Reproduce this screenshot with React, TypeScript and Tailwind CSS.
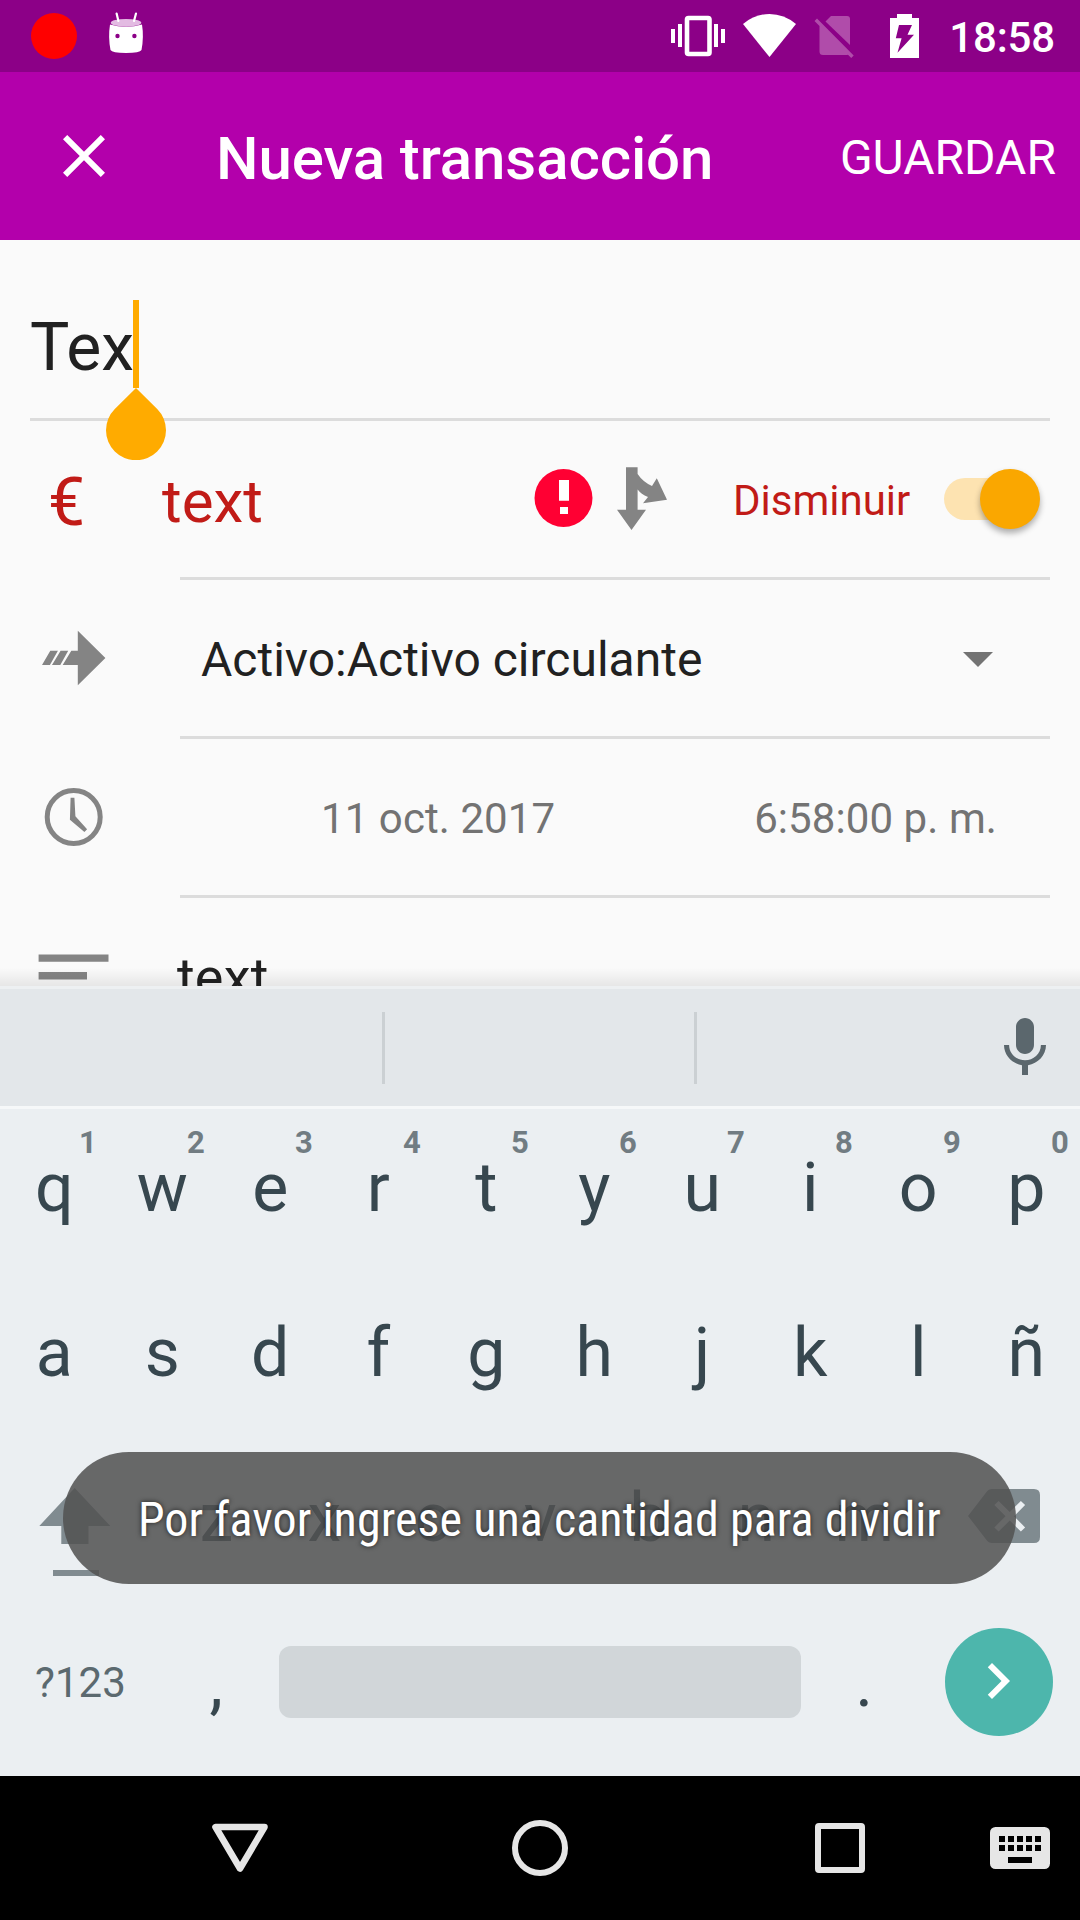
import React from "react";

const TOP_KEYS = ["q", "w", "e", "r", "t", "y", "u", "i", "o", "p"];
const TOP_HINTS = ["1", "2", "3", "4", "5", "6", "7", "8", "9", "0"];
const HOME_KEYS = ["a", "s", "d", "f", "g", "h", "j", "k", "l", "ñ"];
const BOTTOM_KEYS = ["z", "x", "c", "v", "b", "n", "m"];

function StatusBar() {
  return (
    <div className="flex h-[72px] items-start bg-[#8c0087] pl-[31px] pr-[25px]">
      <div className="mt-[13px] size-[46px] rounded-full bg-[#ff0000]" />
      <svg className="ml-[31px] mt-[12px]" width="36" height="42" viewBox="108 12 36 42">
        <path d="M110 24.500Q126 29 142 24.500Q144 37 141.500 50Q140 53 126 53Q112 53 110.500 50Q108 37 110 24.500Z" fill="#fff" />
        <ellipse cx="126" cy="22.800" rx="15.300" ry="3.900" fill="#e3bbe2" />
        <path d="M116.600 13.500L118.400 21M136 13.500L134 21" stroke="#fff" strokeWidth="2.200" strokeLinecap="round" />
        <circle cx="117.500" cy="36" r="2.200" fill="#8c0087" />
        <circle cx="134.400" cy="36" r="2.200" fill="#8c0087" />
      </svg>
      <svg className="ml-[526px] shrink-0" width="254" height="72" viewBox="670 0 254 72">
        <g fill="#fff">
          <rect x="671" y="29" width="4" height="14" />
          <rect x="678" y="24" width="4" height="23" />
          <rect x="714" y="24" width="4" height="23" />
          <rect x="721" y="29" width="4" height="14" />
          <path d="M743 24Q755 14 769.500 14T796 24L769.500 57Z" />
          <path fillRule="evenodd" d="M897 14H912V18H919V58H890V18H897ZM899 25H912L907.500 34.700H914L897.500 52.700L901.600 38.300H895.800Z" />
        </g>
        <rect x="687" y="18" width="22.500" height="36" rx="1.500" fill="none" stroke="#fff" strokeWidth="4.600" />
        <g fill="#b04caa">
          <path d="M831 16H847Q850 16 850 19V45L825.500 21.500Z" />
          <path d="M814.500 21L817 18.500L853.700 55.500L851.200 58L848 54.700Q847 55 846 55H823Q819.500 55 819.500 51.500V26Z" />
        </g>
      </svg>
      <span className="ml-auto whitespace-nowrap text-[42px] font-medium leading-[75px] tracking-[-0.15px] text-white">18:58</span>
    </div>
  );
}

function AppBar() {
  return (
    <div className="flex h-[168px] items-start bg-[#b300ab] pl-[63px] pr-[24px] text-white">
      <svg className="mt-[63px]" width="42" height="42" viewBox="5 5 14 14" fill="#fff">
        <path d="M19 6.410L17.590 5L12 10.590L6.410 5L5 6.410L10.590 12L5 17.590L6.410 19L12 13.410L17.590 19L19 17.590L13.410 12Z" />
      </svg>
      <h1 className="ml-[111px] whitespace-nowrap text-[60px] font-medium leading-[173px] tracking-[-0.08px]">Nueva transacción</h1>
      <span className="ml-auto text-[48px] leading-[171px]">GUARDAR</span>
    </div>
  );
}

function Row({ children }: { children: React.ReactNode }) {
  return (
    <>
      <div className="flex h-[156px] shrink-0 items-start">{children}</div>
      <div className="ml-[180px] mr-[30px] h-[3px] shrink-0 bg-[#dcdcdc]" />
    </>
  );
}

function TransactionForm() {
  return (
    <div className="relative flex h-[746px] flex-col overflow-hidden bg-[#fafafa] text-[#212121]">
      <div className="mx-[30px] flex h-[181px] shrink-0 items-start border-b-[3px] border-[#dcdcdc] pt-[60px]">
        <span className="w-[103px] text-[66px] leading-[95px]">Tex</span>
        <div className="relative h-[88px] w-[6px] bg-[#ffab00]">
          <svg className="absolute -left-[27px] top-[88px]" width="60" height="72" viewBox="0 0 60 72">
            <path d="M30 0L51.200 21A30 30 0 1 1 8.800 21Z" fill="#ffab00" />
          </svg>
        </div>
      </div>

      <Row>
        <span className="ml-[48px] w-[114px] text-[66px] leading-[163px] text-[#c11b17]">€</span>
        <span className="text-[60px] leading-[161px] text-[#c11b17]">text</span>
        <div className="ml-auto flex items-start">
          <svg className="mt-[40px]" width="140" height="76" viewBox="530 461 140 76">
            <circle cx="563.500" cy="498" r="29" fill="#ff0033" />
            <path d="M559 480H569V500.700H559ZM560 507H568V514H560Z" fill="#fff" />
            <path d="M626 467.300H637.600V474Q643 482 652 486L656.800 478.300L667 499.700L643 503.300L648 497Q641 494 637.600 489.500V509.700H646L631.500 530L617 509.700H626Z" fill="#848484" />
          </svg>
          <span className="ml-[63px] w-[174px] whitespace-nowrap text-[42px] leading-[159px] text-[#c11b17]">Disminuir</span>
          <div className="ml-[37px] mr-[40px] mt-[47px] flex h-[61px] w-[96px] items-center">
            <div className="relative h-[42px] w-[70px] rounded-full bg-[#fde3b1]">
              <div className="absolute -top-[9px] left-[36px] size-[60px] rounded-full bg-[#faa700] shadow-[0_4px_6px_rgba(0,0,0,0.32)]" />
            </div>
          </div>
        </div>
      </Row>

      <Row>
        <svg className="ml-[42px] mt-[50px]" width="64" height="56" viewBox="42 630 64 56" fill="#848484">
          <path d="M77.800 630.700L105.400 658L77.800 685.300V665H62.700L71.300 650.700H77.800Z" />
          <path d="M42 665L50.300 650.700H57.900L49.900 665ZM52 665L60.600 650.700H68.200L60.300 665Z" />
        </svg>
        <span className="ml-[95px] whitespace-nowrap text-[48px] leading-[159px]">Activo:Activo circulante</span>
        <svg className="ml-auto mr-[87px] mt-[72px]" width="30" height="15" viewBox="0 0 30 15">
          <path d="M0 0H30L15 15Z" fill="#737373" />
        </svg>
      </Row>

      <Row>
        <svg className="ml-[44px] mt-[48px]" width="60" height="60" viewBox="44 787 60 60">
          <circle cx="73.700" cy="817" r="26.500" fill="none" stroke="#848484" strokeWidth="5" />
          <path d="M70.600 797.700H74.400L75.400 816.300L87.100 829.300L84.400 832L69.900 819.700Z" fill="#848484" />
        </svg>
        <span className="ml-[217px] whitespace-nowrap text-[42px] leading-[159px] tracking-[0.08px] text-[#737373]">11 oct. 2017</span>
        <span className="ml-auto mr-[83px] whitespace-nowrap text-[42px] leading-[159px] tracking-[0.08px] text-[#737373]">6:58:00 p. m.</span>
      </Row>

      <div className="flex h-[160px] shrink-0 items-start">
        <svg className="ml-[38px] mt-[56px]" width="71" height="30" viewBox="38 954 71 30" fill="#848484">
          <path d="M38.600 954.500H108.500V961.700H38.600ZM38.600 972H87V979.600H38.600Z" />
        </svg>
        <span className="ml-[68px] text-[54px] leading-[160px] tracking-[0.2px]">text</span>
      </div>
      <div className="absolute inset-x-0 bottom-0 h-[18px] bg-gradient-to-b from-transparent to-black/8" />
    </div>
  );
}

function Key({ label, className }: { label: string; className: string }) {
  return <span className={"block pl-[0.5px] text-center text-[68px] " + className}>{label}</span>;
}

function Keyboard() {
  return (
    <div className="relative h-[790px] bg-[#ebeff2] text-[#37474f]">
      <div className="flex h-[123px] items-start border-b-[3px] border-t-[3px] border-b-[#f6f8f9] border-t-[#edf0f2] bg-[#e3e7ea]">
        <div className="ml-[382px] mt-[23px] h-[72px] w-[3px] bg-[#cbd0d3]" />
        <div className="ml-[309px] mt-[23px] h-[72px] w-[3px] bg-[#cbd0d3]" />
        <svg className="ml-auto mr-[19px] mt-[23px]" width="72" height="72" viewBox="0 0 24 24" fill="#5b676d">
          <path d="M12 14c1.660 0 2.990-1.340 2.990-3L15 5c0-1.660-1.340-3-3-3S9 3.340 9 5v6c0 1.660 1.340 3 3 3zm5.300-3c0 3-2.540 5.100-5.300 5.100S6.700 14 6.700 11H5c0 3.410 2.720 6.230 6 6.720V21h2v-3.280c3.280-.480 6-3.300 6-6.720h-1.700z" />
        </svg>
      </div>

      <div className="grid h-[162px] grid-cols-10">
        {TOP_KEYS.map((k, i) => (
          <div key={k} className="relative">
            <Key label={k} className="leading-[158px]" />
            <span className="absolute left-[68px] top-[14px] w-[40px] text-center text-[31px] font-bold leading-[40px] text-[#717c82]">{TOP_HINTS[i]}</span>
          </div>
        ))}
      </div>
      <div className="grid h-[165px] grid-cols-10">
        {HOME_KEYS.map((k) => (
          <Key key={k} label={k} className="leading-[164px]" />
        ))}
      </div>
      <div className="flex h-[165px] items-start">
        <svg className="mt-[50px]" width="162" height="92" viewBox="0 1486 162 92" fill="#808b90">
          <path d="M74.700 1488L110.300 1526H88.500V1544H61.300V1526H39.300Z" />
          <rect x="53" y="1570" width="46" height="6" />
        </svg>
        {BOTTOM_KEYS.map((k) => (
          <Key key={k} label={k} className="w-[108px] leading-[164px]" />
        ))}
        <svg className="mt-[52px]" width="162" height="58" viewBox="918 1488 162 58">
          <path d="M992 1489H1034Q1040 1489 1040 1495V1537Q1040 1543 1034 1543H992Q988.500 1543 986.500 1540L968 1516L986.500 1492Q988.500 1489 992 1489Z" fill="#808b90" />
          <path d="M996.500 1503L1023 1529.500M1023 1503L996.500 1529.500" stroke="#ebeff2" strokeWidth="6" />
        </svg>
      </div>
      <div className="flex h-[165px] items-start">
        <span className="w-[162px] pr-px text-center text-[42px] leading-[163px] tracking-[0.1px] text-[#5b696f]">?123</span>
        <Key label="," className="w-[108px] leading-[164px]" />
        <div className="ml-[9px] mt-[45px] h-[72px] w-[522px] rounded-[12px] bg-[#d1d6d9]" />
        <Key label="." className="ml-[9px] w-[108px] leading-[164px]" />
        <div className="ml-[27px] mt-[27px] flex size-[108px] items-center justify-center rounded-full bg-[#4db6ac]">
          <svg className="-mt-[2px] mr-[2px]" width="72" height="72" viewBox="0 0 24 24" fill="#fff">
            <path d="M10 6L8.590 7.410 13.170 12l-4.580 4.590L10 18l6-6z" />
          </svg>
        </div>
      </div>

      <div className="absolute left-[63px] top-[466px] flex h-[132px] w-[953px] items-start justify-center rounded-full bg-[#525252]/86">
        <span className="whitespace-nowrap font-['Roboto_Condensed','Roboto'] text-[48px] leading-[135px] tracking-[0.08px] text-white [font-stretch:75%] [text-shadow:0_0_5px_rgba(0,0,0,0.73)]">
          Por favor ingrese una cantidad para dividir
        </span>
      </div>
    </div>
  );
}

function NavBar() {
  return (
    <div className="flex h-[144px] items-center bg-black">
      <svg className="ml-[210px]" width="60" height="60" viewBox="210 1818 60 60">
        <path d="M215.500 1827H264.500L240 1868.500Z" fill="none" stroke="#e6e6e6" strokeWidth="6.600" strokeLinejoin="round" />
      </svg>
      <div className="ml-[242px] size-[56px] rounded-full border-[6px] border-[#e6e6e6]" />
      <div className="ml-[247px] size-[50px] rounded-[4px] border-[6px] border-[#e6e6e6]" />
      <svg className="ml-[125px]" width="60" height="42" viewBox="0 0 60 42">
        <rect width="60" height="42" rx="5.500" fill="#e6e6e6" />
        <path d="M9 9h6v6h-6zM18 9h6v6h-6zM27 9h6v6h-6zM36 9h6v6h-6zM45 9h6v6h-6zM9 18h6v6h-6zM18 18h6v6h-6zM27 18h6v6h-6zM36 18h6v6h-6zM45 18h6v6h-6zM18 30h24v6h-24z" fill="#000" />
      </svg>
    </div>
  );
}

export default function App() {
  return (
    <div className="h-[1920px] w-[1080px] overflow-hidden font-['Roboto',sans-serif]">
      <StatusBar />
      <AppBar />
      <TransactionForm />
      <Keyboard />
      <NavBar />
    </div>
  );
}
